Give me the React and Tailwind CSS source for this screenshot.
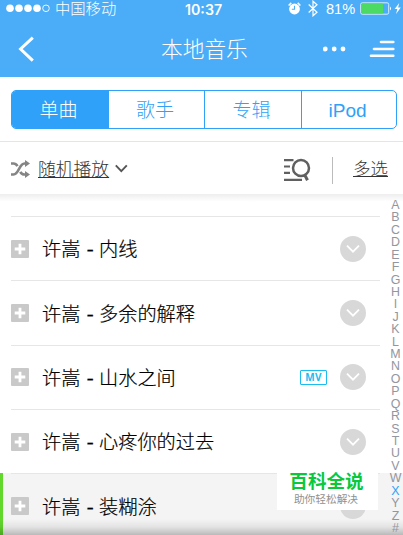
import React, { useState } from "react";

const tabs = ["单曲", "歌手", "专辑", "iPod"];

const songs = [
  { title: "许嵩 - 内线" },
  { title: "许嵩 - 多余的解释" },
  { title: "许嵩 - 山水之间", mv: true },
  { title: "许嵩 - 心疼你的过去" },
  { title: "许嵩 - 装糊涂", playing: true },
];

const letters = "ABCDEFGHIJKLMNOPQRSTUVWXYZ#".split("");

const StatusBar = () => (
  <div className="flex h-[17px] items-center pl-[6px] pr-px">
    <svg className="h-[9px] w-[44px] shrink-0" viewBox="0 0 44 9" fill="white">
      <circle cx="4" cy="4.3" r="3.8" />
      <circle cx="13" cy="4.3" r="3.8" />
      <circle cx="22" cy="4.3" r="3.8" />
      <circle cx="31" cy="4.3" r="3.8" />
      <circle cx="40" cy="4.3" r="3.3" fill="none" stroke="white" strokeWidth="0.9" />
    </svg>
    <span className="ml-[5px] w-[130px] text-[15.3px] leading-[17px] font-light">中国移动</span>
    <span className="w-[103px] pt-px font-['Inter','Liberation_Sans',sans-serif] text-[14.2px] leading-[17px] font-semibold">
      10:37
    </span>
    <svg className="h-[13px] w-[13px] shrink-0" viewBox="0 0 13 13">
      <circle cx="6.5" cy="7" r="5.4" fill="white" />
      <path d="M.6 3.5 3.3.9M12.4 3.5 9.7.9" stroke="white" strokeWidth="1.5" />
      <path d="M6.5 3.8v3.5H3.8" fill="none" stroke="#4badf8" strokeWidth="1.1" />
    </svg>
    <svg className="ml-[7px] h-[17px] w-[10px] shrink-0" viewBox="0 0 10 17">
      <path d="M.7 4.5 9 12.2 5 15.8V1.2L9 4.8.7 12.5" fill="none" stroke="white" strokeWidth="1.2" />
    </svg>
    <span className="ml-[8px] w-[34px] pt-px text-[14.6px] leading-[17px]">81%</span>
    <svg className="h-[13px] w-[42px] shrink-0" viewBox="0 0 42 13">
      <rect x=".7" y=".8" width="28" height="11.4" rx="1.6" fill="none" stroke="#e6f5ff" strokeWidth="0.9" />
      <rect x="1.5" y="1.6" width="21.5" height="9.8" rx=".6" fill="#4cd964" />
      <path d="M30 4.5q2 2 0 4z" fill="white" />
      <path d="m39.2 1-4.5 6h2.7L36 12l4.8-6.5h-2.7z" fill="white" />
    </svg>
  </div>
);

const Header = () => (
  <header className="h-[77px] bg-[#4badf8] text-white">
    <StatusBar />
    <div className="flex h-[60px] items-center pt-[4px] pl-[18px] pr-[8px]">
      <button className="w-[143px]">
        <svg className="h-[28px] w-[18px]" viewBox="0 0 18 28">
          <path d="m14.8 2.7-12.2 11.3 12.2 11.7" fill="none" stroke="white" strokeWidth="3" />
        </svg>
      </button>
      <h1 className="w-[162px] pt-px text-[21.7px] leading-[28px] font-light">本地音乐</h1>
      <svg className="h-[6px] w-[23px]" viewBox="0 0 23 6" fill="white">
        <circle cx="2.3" cy="3" r="2.4" />
        <circle cx="11.2" cy="3" r="2.4" />
        <circle cx="20" cy="3" r="2.4" />
      </svg>
      <svg className="ml-auto h-[18px] w-[26px]" viewBox="0 0 26 18">
        <path
          d="M12 2h12.3M5 9h19.3M2 15.7h22.3"
          stroke="white"
          strokeWidth="2.6"
          strokeLinecap="round"
        />
      </svg>
    </div>
  </header>
);

const Toolbar = () => (
  <div className="flex h-[53px] items-center border-t border-[#e5e5e5] pl-[11px] pr-[15px] text-[#333]">
    <svg className="mt-px h-[18px] w-[20px]" viewBox="0 0 20 18" fill="none" stroke="#858585" strokeWidth="2.7">
      <path d="M0 3.5h2.5c2 0 3 1 4 2.6M0 14.5h2.5c5.5 0 5.5-11 11-11H15M9.3 11.8c1 1.8 2.2 2.7 4.2 2.7H15" />
      <path d="m14 0 5 3.5L14 7zM14 11l5 3.5-5 3.5z" fill="#858585" stroke="none" />
    </svg>
    <button className="ml-[7px] pt-[3px] text-[17.8px] leading-[22px] font-light underline decoration-1 underline-offset-[1px]">
      随机播放
    </button>
    <svg className="ml-[6px] h-[9px] w-[13px]" viewBox="0 0 13 9">
      <path d="m.8 1.3 5.5 5.8 5.5-5.8" fill="none" stroke="#555" strokeWidth="1.9" />
    </svg>
    <svg
      className="mt-[4px] ml-auto h-[24px] w-[27px]"
      viewBox="0 0 27 24"
      fill="none"
      stroke="#606060"
      strokeWidth="2.2"
    >
      <path d="M0 2.2h9.5M0 8.5h6M0 14.8h6M0 21.8h18" />
      <circle cx="17" cy="10" r="8" strokeWidth="2.5" />
      <path d="m20.5 16.5 3 5.8" strokeWidth="3" />
    </svg>
    <span className="mt-[4px] ml-[21px] h-[27px] w-px bg-[#bbb]" />
    <button className="ml-[20px] pt-px text-[17.5px] leading-[22px] font-light underline decoration-1 underline-offset-[1px]">
      多选
    </button>
  </div>
);

const SongRow = ({ song }) => (
  <div
    className={`flex h-[64.35px] items-stretch ${
      song.playing ? "border-l-[3px] border-[#62d82d] bg-[#f4f4f4] pl-[8px]" : "pl-[11px]"
    }`}
  >
    <div className="flex w-[369px] items-center border-t border-[#e6e6e6] pr-[14px]">
      <svg className="h-[18px] w-[18px]" viewBox="0 0 18 18">
        <rect width="18" height="18" rx="1" fill="#c9c9c9" />
        <path d="M9 3.7v10.6M3.7 9h10.6" stroke="white" strokeWidth="2.8" />
      </svg>
      <span className="ml-[13px] pt-[3px] text-[19.2px] leading-[26px] font-light text-black [-webkit-text-stroke:0.2px_black]">
        {song.title.split("-")[0]}
        <span className="mx-[0.8px] inline-block scale-x-115">-</span>
        {song.title.split("-")[1]}
      </span>
      {song.mv && (
        <span className="mr-[13px] ml-auto flex h-[15px] w-[27px] items-center justify-center rounded-[1px] border border-[#19bdf0] font-['Open_Sans',sans-serif] text-[10px] leading-[13px] font-bold tracking-[0.4px] text-[#19bdf0]">
          MV
        </span>
      )}
      <svg className={`h-[26px] w-[26px] ${song.mv ? "" : "ml-auto"}`} viewBox="0 0 26 26">
        <circle cx="13" cy="13" r="13" fill="#d8d8d8" />
        <path d="m7 9.7 6 6 6-6" fill="none" stroke="white" strokeWidth="1.8" />
      </svg>
    </div>
  </div>
);

const App = () => {
  const [activeTab, setActiveTab] = useState("单曲");

  return (
    <div className="relative h-[535px] w-[403px] overflow-hidden bg-white font-['Liberation_Sans','Noto_Sans_CJK_SC',sans-serif]">
      <Header />

      <div className="h-[64px] pt-[13px] pl-[11px]">
        <div className="grid h-[39px] w-[386px] grid-cols-[97px_96px_97px_1fr] overflow-hidden rounded-[5px] border border-[#2fa1f8]">
          {tabs.map((tab) => (
            <button
              key={tab}
              onClick={() => setActiveTab(tab)}
              className={`border-r border-[#2fa1f8] pt-px pr-[3px] text-[19px] leading-[38px] font-light last:border-r-0 ${
                activeTab === tab ? "bg-[#2fa1f8] text-white" : "text-[#2fa1f8]"
              }`}
            >
              {tab}
            </button>
          ))}
        </div>
      </div>

      <Toolbar />

      <div className="h-[22px] bg-linear-to-b from-[#eeeeee] to-white to-35%" />

      <div>
        {songs.map((song) => (
          <SongRow key={song.title} song={song} />
        ))}
      </div>

      {/* shadow of the player bar below the list */}
      <div className="absolute inset-x-0 bottom-0 h-[16px] bg-linear-to-b from-transparent via-black/7 to-black/24" />

      <div className="absolute top-[199px] right-0 flex w-[15px] flex-col text-center text-[12.4px] leading-[12.42px] text-[#92969e]">
        {letters.map((letter) => (
          <span key={letter} className={letter === "X" ? "text-[#2fa1f8]" : ""}>
            {letter}
          </span>
        ))}
      </div>

      <div className="absolute top-[469px] left-[277px] h-[41px] w-[101px] bg-white text-center">
        <p className="pt-px pr-[2px] text-[18.6px] leading-[24px] font-bold text-[#09c83b]">百科全说</p>
        <p className="pr-[3px] text-[10.7px] leading-[11px] text-[#909090]">助你轻松解决</p>
      </div>
    </div>
  );
};

export default App;
